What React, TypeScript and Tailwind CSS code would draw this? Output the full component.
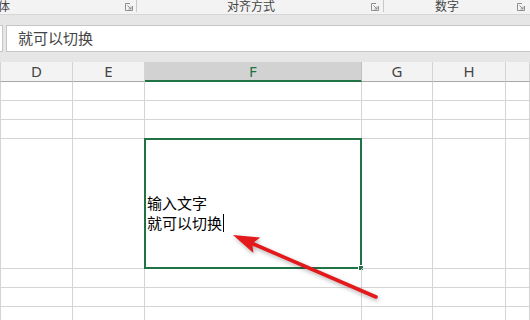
import React from "react";

const Launcher = () => (
    <svg width="8" height="8" viewBox="0 0 8 8" fill="none" stroke="#8f8f8f" strokeWidth="1" className="mt-[3px] shrink-0">
        <path d="M5 0.5H0.5V7.5H7.5V3" />
        <path d="M2.5 2.5L6 6M6 3.5V6H3.5" />
    </svg>
);

const cols = [
    { key: "D", w: "w-[73px] border-l border-l-[#d4d4d4]" },
    { key: "E", w: "w-[72px]" },
    { key: "F", w: "w-[217px]" },
    { key: "G", w: "w-[71px]" },
    { key: "H", w: "w-[73px]" },
    { key: "I", w: "flex-1" },
];

const rowHeights = ["h-[19px]", "h-[19px]", "h-[19px]", "h-[130px]", "h-[19px]", "h-[19px]", "h-[19px]"];

export default function App() {
    return (
        <div className="relative w-[530px] h-[320px] overflow-hidden bg-white font-['Noto_Sans_CJK_SC',sans-serif]">
            {/* ribbon group labels */}
            <div className="flex h-[15px] bg-[#f3f3f3] border-b border-[#d6d6d6] text-[12px] leading-[12px] text-[#444] overflow-hidden">
                <div className="flex w-[137px] items-start">
                    <span className="-ml-[2px]">体</span>
                    <div className="ml-auto flex items-start">
                        <Launcher />
                        <div className="ml-[3px] w-px h-[12px] bg-[#c8c8c8]" />
                    </div>
                </div>
                <div className="flex w-[247px] items-start pl-[90px]">
                    <span>对齐方式</span>
                    <div className="ml-auto flex items-start">
                        <Launcher />
                        <div className="ml-[4px] w-px h-[12px] bg-[#c8c8c8]" />
                    </div>
                </div>
                <div className="flex flex-1 items-start pl-[51px] pr-[5px]">
                    <span>数字</span>
                    <div className="ml-auto">
                        <Launcher />
                    </div>
                </div>
            </div>

            <div className="h-[10px] bg-[#e6e6e6]" />

            {/* formula bar */}
            <div className="flex h-[27px] bg-[#e6e6e6]">
                <div className="w-[3px] bg-white border border-l-0 border-[#c6c6c6]" />
                <div className="ml-[3px] flex flex-1 items-center bg-white border border-r-0 border-[#c6c6c6] pl-[11px] text-[15px] text-[#444]">
                    就可以切换
                </div>
            </div>

            <div className="h-[10px] bg-[#e6e6e6]" />

            {/* column headers */}
            <div className="flex h-[20px] bg-[#f3f3f3] font-['Noto_Sans',sans-serif] text-[15px] leading-[19px] text-[#444]">
                {cols.map((c) =>
                    c.key === "F" ? (
                        <div key={c.key} className={`${c.w} flex justify-center bg-[#d2d2d2] border-r border-r-[#c0c0c0] border-b-2 border-b-[#217346] text-[#217346]`}>
                            F
                        </div>
                    ) : (
                        <div key={c.key} className={`${c.w} flex justify-center border-r border-r-[#d4d4d4] border-b border-b-[#a8a8a8]`}>
                            {c.key === "I" ? "" : c.key}
                        </div>
                    )
                )}
            </div>

            {/* grid */}
            {rowHeights.map((h, r) => (
                <div key={r} className={`flex ${h}`}>
                    {cols.map((c) => (
                        <div key={c.key} className={`${c.w} relative border-r border-b border-r-[#d4d4d4] border-b-[#d4d4d4]`}>
                            {r === 3 && c.key === "F" && (
                                <>
                                    <div className="pl-[2px] pt-[54px] text-[15px] leading-[20px] text-black">
                                        <div>输入文字</div>
                                        <div className="flex items-center">
                                            就可以切换
                                            <span className="ml-px w-px h-[18px] bg-black" />
                                        </div>
                                    </div>
                                    <div className="absolute -inset-[1px] border-2 border-[#217346]" />
                                    <div className="absolute -right-[3px] -bottom-[3px] w-[6px] h-[6px] bg-[#217346] border border-white" />
                                </>
                            )}
                        </div>
                    ))}
                </div>
            ))}

            {/* red annotation arrow */}
            <svg className="absolute inset-0 drop-shadow-[1px_2px_2px_rgba(0,0,0,0.3)]" width="530" height="320" viewBox="0 0 530 320">
                <line x1="250" y1="242.5" x2="376" y2="297" stroke="#e3191b" strokeWidth="3.6" strokeLinecap="round" />
                <polygon points="233,235 260.2,237.6 252.3,243.4 253.4,253.1" fill="#e3191b" />
            </svg>
        </div>
    );
}
